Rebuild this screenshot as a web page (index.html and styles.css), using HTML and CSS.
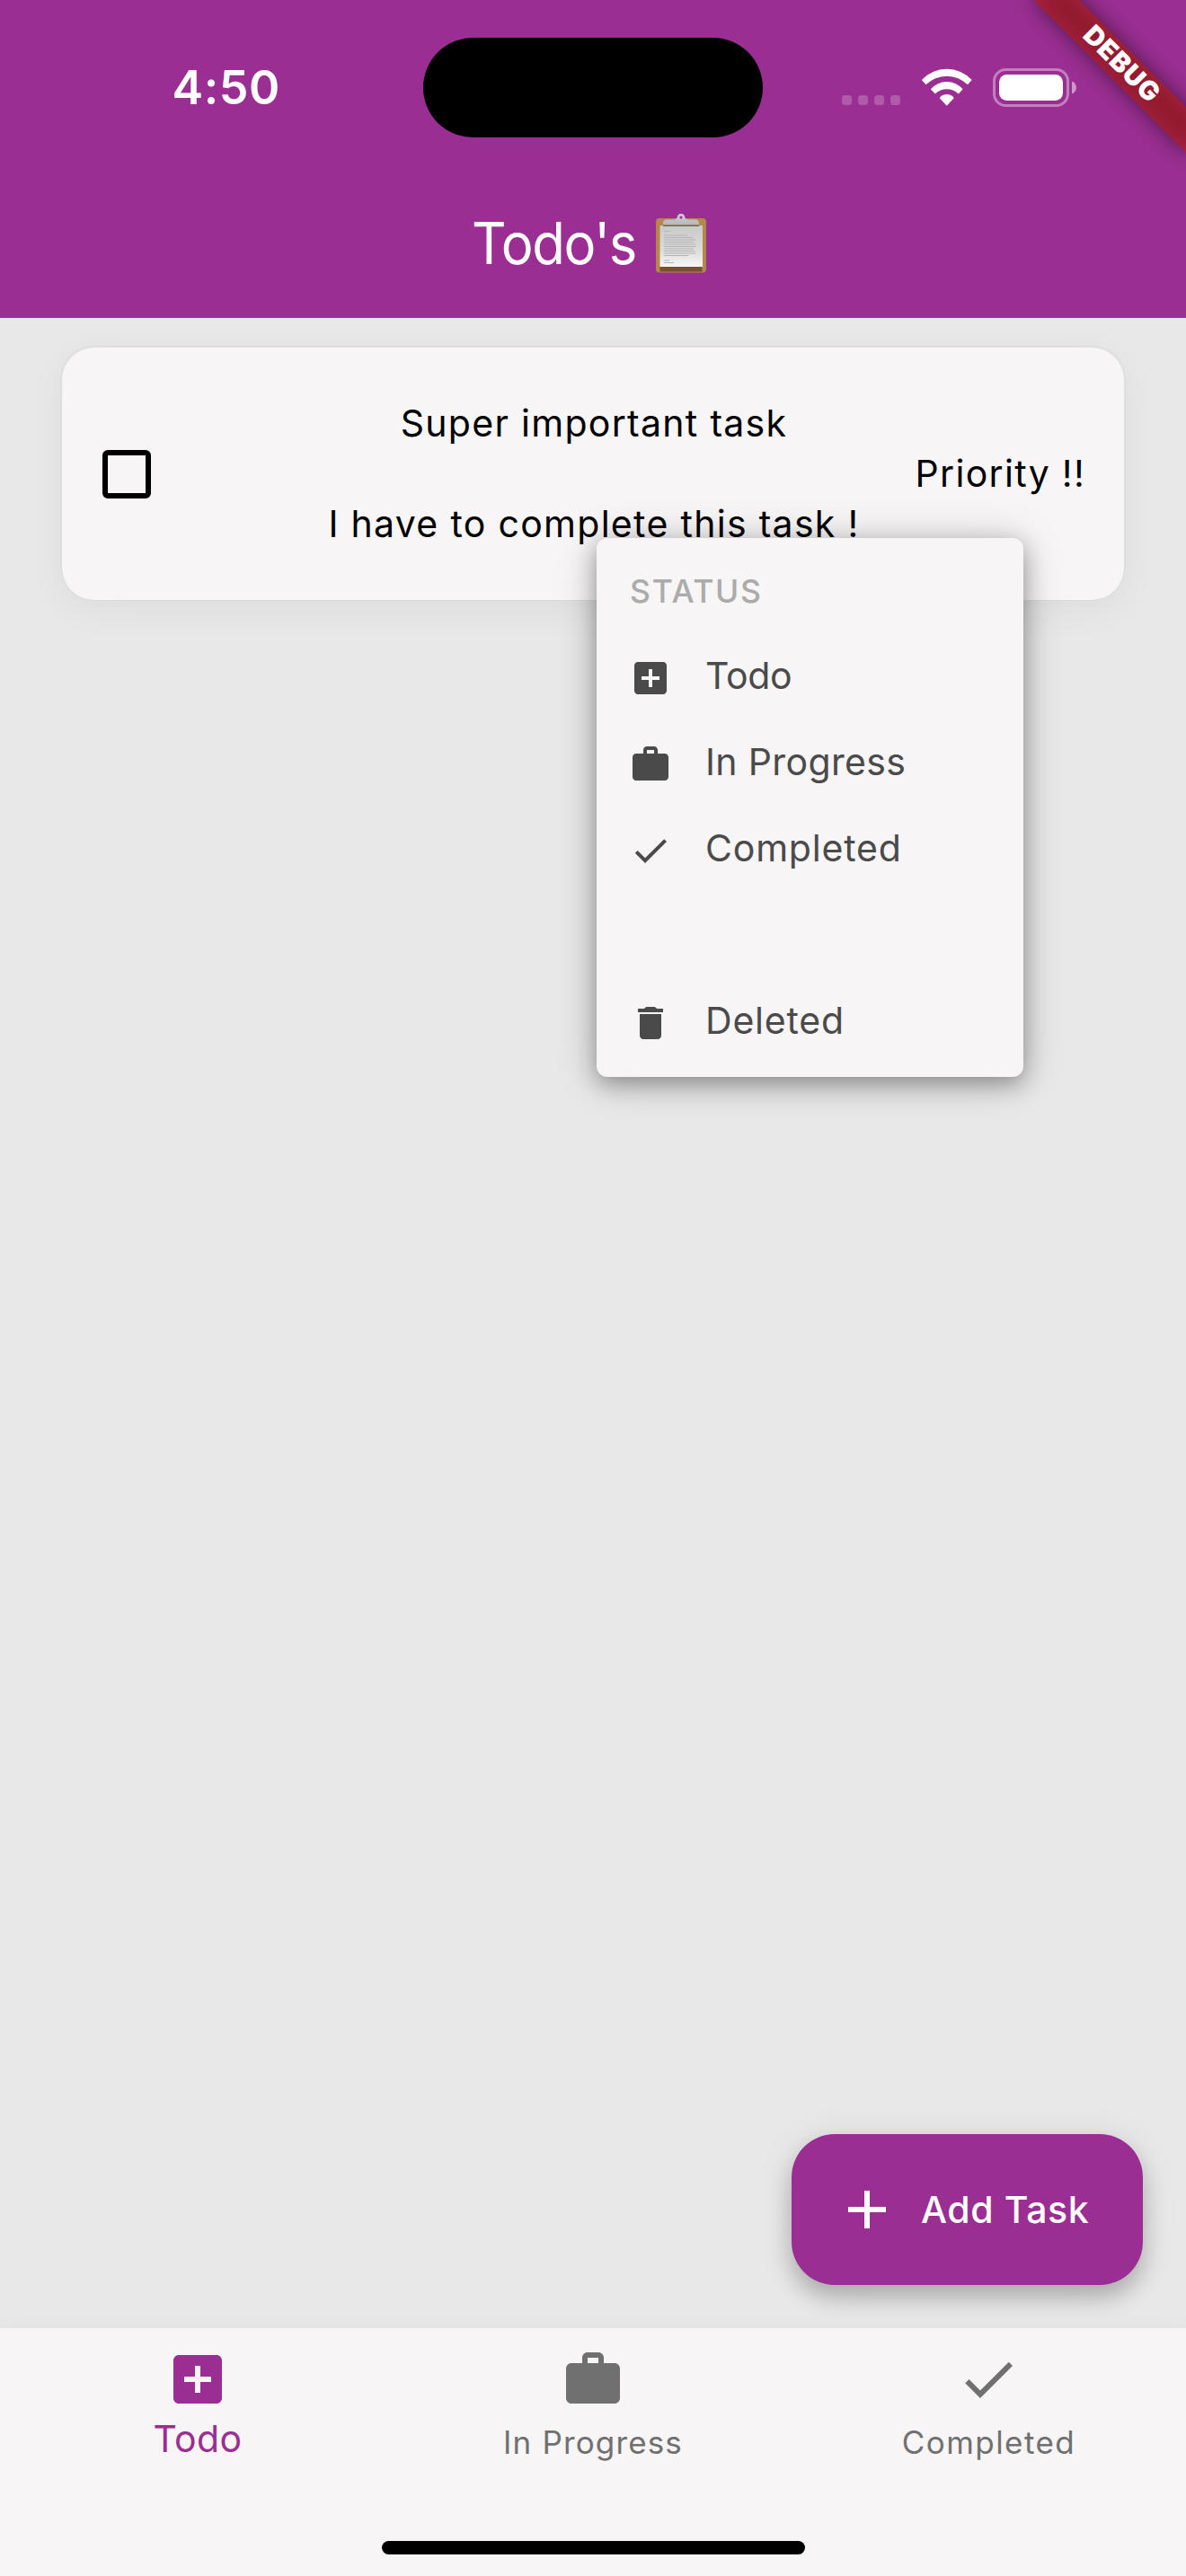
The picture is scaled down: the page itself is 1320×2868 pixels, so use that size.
FILE: index.html
```
<!DOCTYPE html>
<html lang="en">
<head>
<meta charset="utf-8">
<title>Todo's</title>
<link rel="stylesheet" href="styles.css">
</head>
<body>
<svg class="defs" width="0" height="0" aria-hidden="true">
  <symbol id="i-add-box" viewBox="0 0 24 24"><path fill-rule="evenodd" d="M19 3H5c-1.1 0-2 .9-2 2v14c0 1.1.9 2 2 2h14c1.1 0 2-.9 2-2V5c0-1.1-.9-2-2-2zm-2 10h-4v4h-2v-4H7v-2h4V7h2v4h4v2z"/></symbol>
  <symbol id="i-work" viewBox="0 0 24 24"><path fill-rule="evenodd" d="M20 6h-4V4c0-1.11-.89-2-2-2h-4c-1.11 0-2 .89-2 2v2H4c-1.11 0-1.99.89-1.99 2L2 19c0 1.11.89 2 2 2h16c1.11 0 2-.89 2-2V8c0-1.11-.89-2-2-2zm-6 0h-4V4h4v2z"/></symbol>
  <symbol id="i-check" viewBox="0 0 24 24"><path d="M9 16.17 4.83 12l-1.42 1.41L9 19 21 7l-1.41-1.41z"/></symbol>
  <symbol id="i-delete" viewBox="0 0 24 24"><path d="M6 19c0 1.1.9 2 2 2h8c1.1 0 2-.9 2-2V7H6v12zM19 4h-3.500l-.71-.71c-.18-.18-.44-.29-.7-.29H9.910c-.26 0-.52.11-.7.29L8.500 4H5v2h14V4z"/></symbol>
  <symbol id="i-add" viewBox="0 0 24 24"><path d="M19 13h-6v6h-2v-6H5v-2h6V5h2v6h6v2z"/></symbol>
</svg>

<div class="app">
  <header class="app-bar">
    <div class="status-bar">
      <span class="clock">4:50</span>
      <span class="island"></span>
      <div class="indicators">
        <span class="signal"><i></i><i></i><i></i><i></i></span>
        <svg class="wifi" viewBox="44 44 172 128">
          <path d="M46 83A114 114 0 0 1 214 83L200 99A99 99 0 0 0 60 99Z"/>
          <path d="M76 114A71 71 0 0 1 184 114L169 130A55.500 55.500 0 0 0 91 130Z"/>
          <path d="M106 144A29 29 0 0 1 154 144L130 170Z"/>
        </svg>
        <svg class="battery" viewBox="0 0 93 43">
          <rect class="shell" x="1.500" y="1.500" width="82" height="40" rx="13"/>
          <rect class="charge" x="7" y="7" width="71" height="29" rx="8.500"/>
          <path class="nub" d="M88 14.500c3 1 5 4 5 7s-2 6-5 7z"/>
        </svg>
      </div>
    </div>
    <div class="toolbar">
      <h1 class="title">Todo's</h1>
      <svg class="clipboard" viewBox="0 0 56 66" role="img" aria-label="clipboard">
        <defs>
          <linearGradient id="paper" x1="0" y1="0" x2="0" y2="1"><stop offset="0" stop-color="#c9c9c9"/><stop offset=".6" stop-color="#dcdcdc"/><stop offset="1" stop-color="#f6f6f6"/></linearGradient>
          <linearGradient id="clip" x1="0" y1="0" x2="0" y2="1"><stop offset="0" stop-color="#cfd3d8"/><stop offset="1" stop-color="#b5b5b5"/></linearGradient>
        </defs>
        <rect x="0" y="5" width="56" height="60.500" rx="4" fill="#b5884a"/>
        <rect x="4.500" y="58" width="47" height="6.500" fill="#76512a"/>
        <rect x="4.500" y="13" width="47.500" height="46" fill="url(#paper)"/>
        <path d="M9 19.500h7M9 24h26M9 26.500h32M9 29h35M9 31.500h33M9 34h35M9 36.500h36M9 39h33M9 41.500h34M9 44h35M9 46.500h27M9 52h6M9 54.500h11" stroke="#b4b4b4" stroke-width="1.200"/>
        <path d="M8 11h40v3H8z" fill="#6f6347"/>
        <path d="M18 7c4-.5 5-2 6-4h8c1 2 2 3.500 6 4z" fill="#9db4cf"/>
        <path d="M8 12.500V10c0-2 2-3.500 4-3.500h9c2 0 3-1 3-3a4 3.500 0 0 1 8 0c0 2 1 3 3 3h9c2 0 4 1.500 4 3.500v2.500z" fill="url(#clip)"/>
        <circle cx="28" cy="4" r="1.600" fill="#9a2f92"/>
      </svg>
    </div>
    <div class="debug-ribbon"><span class="debug-shadow"></span><span class="debug-label">DEBUG</span></div>
  </header>

  <main class="board">
    <article class="card">
      <span class="checkbox"></span>
      <div class="card-text">
        <p>Super important task</p>
        <p>I have to complete this task !</p>
      </div>
      <p class="priority">Priority !!</p>
    </article>

    <div class="menu">
      <div class="menu-title">STATUS</div>
      <div class="menu-item"><svg><use href="#i-add-box"/></svg><span class="l-todo">Todo</span></div>
      <div class="menu-item"><svg><use href="#i-work"/></svg><span class="l-progress">In Progress</span></div>
      <div class="menu-item"><svg><use href="#i-check"/></svg><span class="l-done">Completed</span></div>
      <div class="menu-item"></div>
      <div class="menu-item"><svg><use href="#i-delete"/></svg><span class="l-done">Deleted</span></div>
    </div>

    <button class="fab"><svg><use href="#i-add"/></svg><span>Add Task</span></button>
  </main>

  <nav class="tabs">
    <div class="tab active"><svg><use href="#i-add-box"/></svg><span>Todo</span></div>
    <div class="tab"><svg><use href="#i-work"/></svg><span>In Progress</span></div>
    <div class="tab"><svg><use href="#i-check"/></svg><span class="wide">Completed</span></div>
    <span class="home-indicator"></span>
  </nav>
</div>
</body>
</html>
```
FILE: styles.css
```
:root {
  --purple: #9a2e92;
  --surface: #f7f5f6;
  --board: #e8e8e8;
}

* { box-sizing: border-box; margin: 0; }

body {
  font-family: Inter, "Liberation Sans", sans-serif;
  font-weight: 370;
  background: var(--board);
}

svg { display: block; fill: currentColor; flex: none; }
.defs { position: absolute; }

.app {
  width: 1320px;
  height: 2868px;
  display: flex;
  flex-direction: column;
  overflow: hidden;
}

/* App bar */
.app-bar {
  position: relative;
  height: 354px;
  background: var(--purple);
  color: #fff;
  overflow: hidden;
}

.status-bar {
  height: 186px;
  padding: 8px 0 0 191.5px;
  display: flex;
  align-items: center;
}

.clock {
  width: 279.500px;
  font-size: 52px;
  font-weight: 600;
  letter-spacing: .5px;
}

.island {
  width: 378px;
  height: 111px;
  border-radius: 56px;
  background: #000;
}

.indicators {
  display: flex;
  align-items: center;
  padding-left: 88px;
}

.signal { display: flex; gap: 7px; padding-top: 29px; }
.signal i {
  width: 11px;
  height: 11px;
  border-radius: 3.500px;
  background: rgba(255, 255, 255, .22);
}

.wifi { width: 57.500px; height: 42.500px; margin-left: 22.500px; }
.battery { width: 93px; height: 43px; margin-left: 22.500px; }
.shell { fill: none; stroke: rgba(255, 255, 255, .4); stroke-width: 3; }
.nub { fill: rgba(255, 255, 255, .5); }

.toolbar {
  height: 168px;
  padding: 1px 9px 0 0;
  display: flex;
  align-items: center;
  justify-content: center;
  gap: 22px;
}

.title {
  margin-right: -13px;
  font-size: 64px;
  font-weight: 370;
  letter-spacing: -1.400px;
  transform: scaleX(.935);
  transform-origin: left;
}

.clipboard { width: 56px; height: 66px; }

/* Debug ribbon, rotated about the top right corner */
.debug-ribbon {
  position: absolute;
  top: 84px;
  left: 1200px;
  width: 240px;
  height: 36px;
  transform-origin: 120px -84px;
  transform: rotate(45deg);
}

.debug-shadow,
.debug-label { position: absolute; inset: 0; }
.debug-shadow { background: rgba(0, 0, 0, .5); filter: blur(11.900px); }
.debug-label {
  background: rgba(183, 28, 28, .63);
  font-size: 29.600px;
  line-height: 33px;
  font-weight: 900;
  letter-spacing: .8px;
  text-align: center;
}

/* Board */
.board {
  position: relative;
  flex: 1;
  padding: 33px 69px 0;
}

.card {
  height: 281px;
  padding: 0 43px 0 45px;
  display: grid;
  grid-template-columns: 1fr auto 1fr;
  align-items: center;
  border-radius: 36px;
  background: var(--surface);
  box-shadow: 0 -1px 0 2px rgba(0, 0, 0, .02), 0 10px 44px rgba(0, 0, 0, .05);
  color: #000;
  font-size: 41px;
  line-height: 112px;
  letter-spacing: 1.300px;
}

.checkbox {
  width: 54px;
  height: 54px;
  border: 6px solid #000;
  border-radius: 6px;
}

.card-text { text-align: center; padding-bottom: 2px; }
.priority { text-align: right; padding-bottom: 2px; }

/* Status menu */
.menu {
  position: absolute;
  left: 664px;
  top: 245px;
  width: 475px;
  height: 600px;
  padding: 11px 36px 12px;
  border-radius: 12px;
  background: var(--surface);
  box-shadow: 0 8px 24px rgba(0, 0, 0, .3), 0 4px 48px rgba(0, 0, 0, .2);
  color: #4a4a4a;
  font-size: 41px;
}

.menu-title {
  height: 97px;
  padding-left: 1px;
  color: #ababab;
  font-size: 35.500px;
  line-height: 97px;
  font-weight: 470;
  letter-spacing: 1.700px;
}

.menu-item {
  height: 96px;
  display: flex;
  align-items: center;
  gap: 37px;
}

.menu-item svg { width: 48px; height: 48px; }
.menu-item span { line-height: 48px; padding-bottom: 6px; }
.l-todo { letter-spacing: -.3px; }
.l-progress { letter-spacing: .35px; }
.l-done { letter-spacing: .8px; }

/* Floating button */
.fab {
  position: absolute;
  right: 48px;
  bottom: 48px;
  width: 391.500px;
  height: 168px;
  padding: 0 0 0 48px;
  display: flex;
  align-items: center;
  gap: 24.500px;
  border: 0;
  border-radius: 48px;
  background: var(--purple);
  box-shadow: 0 14px 24px rgba(0, 0, 0, .22), 0 4px 44px rgba(0, 0, 0, .08);
  color: #fff;
  font: 480 41px Inter, "Liberation Sans", sans-serif;
  letter-spacing: .6px;
}

.fab svg { width: 72px; height: 72px; }

/* Bottom tabs */
.tabs {
  position: relative;
  height: 276px;
  padding-top: 21px;
  display: grid;
  grid-template-columns: repeat(3, 1fr);
  background: var(--surface);
  box-shadow: 0 -2px 24px rgba(0, 0, 0, .03);
  color: #707070;
}

.tab {
  display: flex;
  flex-direction: column;
  align-items: center;
  font-size: 35px;
  line-height: 68.500px;
  letter-spacing: 1.150px;
}

.tab svg { width: 72px; height: 72px; }
.tab .wide { letter-spacing: 1.450px; padding-left: 1px; }
.tab.active {
  color: var(--purple);
  font-size: 41px;
  line-height: 60px;
  letter-spacing: .4px;
}

.home-indicator {
  position: absolute;
  left: 425px;
  bottom: 24px;
  width: 471px;
  height: 15px;
  border-radius: 8px;
  background: #000;
}
```
